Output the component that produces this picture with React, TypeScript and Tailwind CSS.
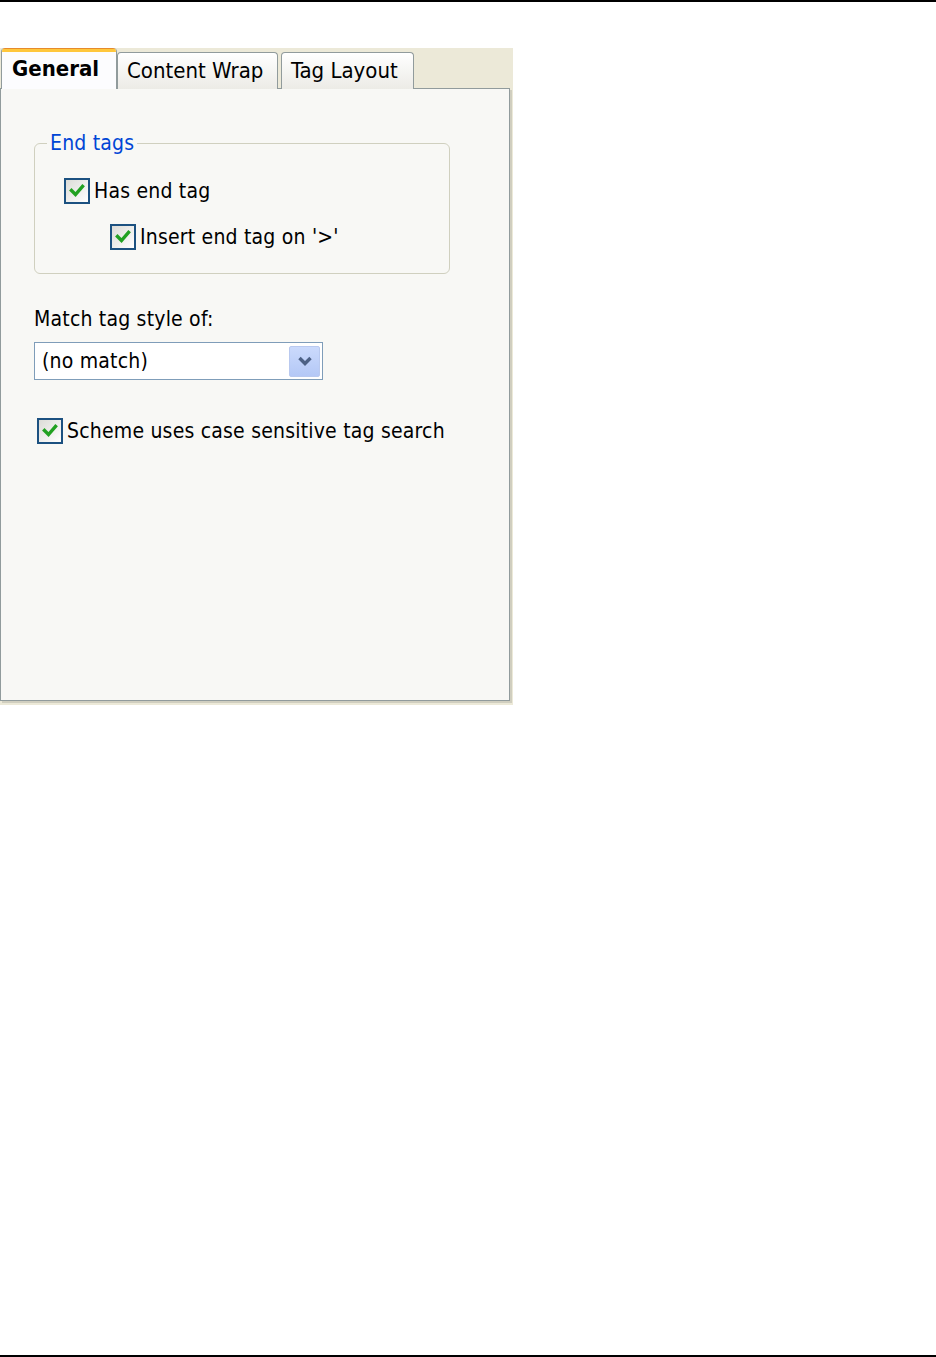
import { useState } from "react";

const FONT = "font-['DejaVu_Sans_Condensed','DejaVu_Sans',sans-serif]";

function CheckBox({ checked }: { checked: boolean }) {
  return (
    <span className="flex h-[26px] w-[26px] shrink-0 items-center justify-center border-2 border-[#1C5180] bg-gradient-to-br from-[#DCDCD7] to-white">
      {checked && (
        <svg width="18" height="18" viewBox="0 0 18 18">
          <path d="M3.5 8.5 L7.5 12.5 L14.5 4.5" fill="none" stroke="#21A121" strokeWidth="3.4" strokeLinecap="square" />
        </svg>
      )}
    </span>
  );
}

function Option({ label, checked, onToggle }: { label: string; checked: boolean; onToggle: () => void }) {
  return (
    <label className="flex cursor-default items-center gap-[4px]" onClick={onToggle}>
      <CheckBox checked={checked} />
      <span className="text-[21px] leading-[26px] tracking-[0.2px] text-black">{label}</span>
    </label>
  );
}

const TABS = ["General", "Content Wrap", "Tag Layout"];

export default function App() {
  const [tab, setTab] = useState(0);
  const [hasEnd, setHasEnd] = useState(true);
  const [insertEnd, setInsertEnd] = useState(true);
  const [caseSensitive, setCaseSensitive] = useState(true);

  return (
    <div className={`${FONT} box-border flex h-[1357px] w-[936px] flex-col border-t-2 border-b-2 border-black bg-white`}>
      <div className="mt-[46px] flex h-[657px] w-[513px] flex-col bg-[#ECE9D8]">
        {/* Tabs */}
        <div className="relative z-10 -mb-px flex h-[41px] items-end pl-px">
          {TABS.map((t, i) =>
            i === tab ? (
              <button
                key={t}
                onClick={() => setTab(i)}
                className="flex h-[41px] w-[116px] flex-col overflow-hidden rounded-t-[4px] border-x border-[#919B9C] bg-[#FCFCFE] text-left"
              >
                <span className="h-[1px] w-full bg-[#E68B2C]" />
                <span className="h-[3px] w-full bg-[#FFC73C]" />
                <span className="pl-[10px] pt-[5px] text-[22px] font-bold leading-[24px] text-black">{t}</span>
              </button>
            ) : (
              <button
                key={t}
                onClick={() => setTab(i)}
                className={`h-[37px] rounded-t-[4px] border border-b-0 border-[#919B9C] bg-gradient-to-b from-white to-[#ECEBE6] pl-[9px] text-left text-[22px] leading-[24px] text-black ${
                  i === 1 ? "w-[161px]" : "ml-[3px] w-[133px]"
                }`}
              >
                {t}
              </button>
            )
          )}
        </div>

        {/* Page */}
        <div className="mb-[4px] mr-[3px] flex-1 border border-[#919B9C] bg-[#F8F8F5] pl-[33px] pt-[43px] shadow-[2px_2px_0_#D0CEBF]">
          <fieldset className="h-[142px] w-[416px] rounded-[6px] border border-[#D0D0BF]">
            <legend className="ml-[12px] px-[3px] text-[21px] leading-[22px] tracking-[0.2px] text-[#0046D5]">End tags</legend>
            <div className="flex flex-col gap-[20px] pl-[29px] pt-[24px]">
              <Option label="Has end tag" checked={hasEnd} onToggle={() => setHasEnd(!hasEnd)} />
              <div className="pl-[46px]">
                <Option label="Insert end tag on '>'" checked={insertEnd} onToggle={() => setInsertEnd(!insertEnd)} />
              </div>
            </div>
          </fieldset>

          <div className="mt-[32px] text-[21px] leading-[26px] tracking-[0.2px] text-black">Match tag style of:</div>
          <div className="mt-[10px] flex h-[38px] w-[289px] items-center border border-[#7F9DB9] bg-white pl-[7px] pr-[2px]">
            <span className="flex-1 text-[21px] leading-[26px] tracking-[0.2px] text-black">(no match)</span>
            <span className="flex h-[31px] w-[31px] items-center justify-center rounded-[2px] border border-[#B9C9EF] bg-gradient-to-b from-[#CBDAFC] to-[#B4C8F6]">
              <svg width="18" height="14" viewBox="0 0 18 14">
                <path d="M3.5 4 L9 9.5 L14.5 4" fill="none" stroke="#4D6185" strokeWidth="3.4" />
              </svg>
            </span>
          </div>

          <div className="mt-[38px] pl-[3px]">
            <Option label="Scheme uses case sensitive tag search" checked={caseSensitive} onToggle={() => setCaseSensitive(!caseSensitive)} />
          </div>
        </div>
      </div>
    </div>
  );
}
